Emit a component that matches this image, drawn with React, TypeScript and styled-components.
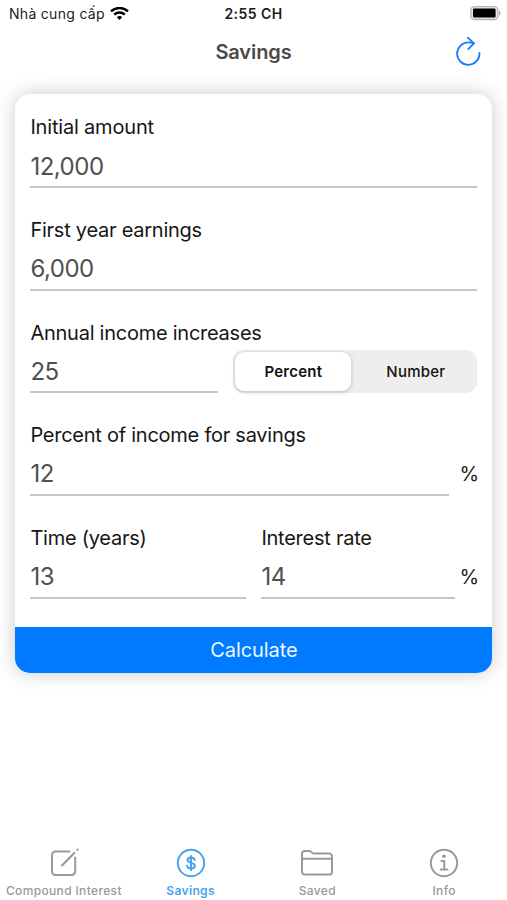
import React, { useState } from "react";
import styled, { createGlobalStyle } from "styled-components";

const GlobalStyle = createGlobalStyle`
  *, *::before, *::after { box-sizing: border-box; }
  body {
    margin: 0;
    background: #fff;
    font-family: Inter, "Liberation Sans", sans-serif;
    -webkit-font-smoothing: antialiased;
  }
  button, input { font-family: inherit; }
`;

const Screen = styled.div`
  display: flex;
  flex-direction: column;
  width: 507px;
  height: 900px;
  overflow: hidden;
  background: #fff;
`;

const StatusBar = styled.header`
  display: grid;
  grid-template-columns: 1fr auto 1fr;
  align-items: center;
  height: 27px;
  padding: 0 6px 0 9px;
  color: #1c1c1c;
`;

const Carrier = styled.div`
  display: flex;
  align-items: center;
  gap: 5px;
  font-size: 14px;
  letter-spacing: 0.3px;
`;

const Clock = styled.time`
  margin-left: -3px;
  font-size: 14px;
  font-weight: 600;
  letter-spacing: 0.45px;
`;

const BatterySlot = styled.div`
  display: flex;
  justify-content: flex-end;
`;

const NavBar = styled.div`
  display: grid;
  grid-template-columns: 1fr auto 1fr;
  align-items: center;
  height: 50px;
  padding: 0 25px;
`;

const NavTitle = styled.h1`
  grid-column: 2;
  margin: 0;
  font-size: 20px;
  font-weight: 600;
  letter-spacing: -0.1px;
  color: #4a4a4a;
`;

const RefreshButton = styled.button`
  display: flex;
  justify-self: end;
  padding: 0;
  border: 0;
  background: none;
`;

const Card = styled.form`
  display: flex;
  flex-direction: column;
  width: 477px;
  height: 579px;
  margin: 17px 0 0 15.4px;
  overflow: hidden;
  border-radius: 15px;
  background: #fff;
  box-shadow: 0 0 20px rgba(0, 0, 0, 0.21);
`;

const Fields = styled.div`
  flex: 1;
  padding: 20px 15px 0;
`;

const FieldRow = styled.div`
  display: flex;
  align-items: flex-start;
  height: 102.65px;
`;

const Field = styled.label<{ $width?: number; $offset?: number }>`
  display: flex;
  flex: ${(p) => (p.$width ? `0 0 ${p.$width}px` : "1")};
  flex-direction: column;
  min-width: 0;
  margin-left: ${(p) => p.$offset ?? 0}px;
`;

const Label = styled.span<{ $tracking?: number }>`
  height: 27px;
  padding-top: 0.4px;
  font-size: 20px;
  line-height: 27px;
  letter-spacing: ${(p) => p.$tracking ?? -0.25}px;
  white-space: nowrap;
  color: #161616;
`;

const Value = styled.input`
  width: 100%;
  height: 47px;
  padding: 5px 0 0;
  border: 0;
  border-bottom: 2px solid #c6c6c6;
  border-radius: 0;
  outline: 0;
  background: transparent;
  font-size: 24px;
  letter-spacing: -0.5px;
  color: #505050;
`;

const Unit = styled.span<{ $gap: number }>`
  width: 18px;
  margin: 39.5px 0 0 ${(p) => p.$gap}px;
  font-size: 20px;
  line-height: 27px;
  letter-spacing: -0.5px;
  color: #222;
`;

const Segments = styled.div`
  display: flex;
  gap: 5px;
  width: 244px;
  height: 43px;
  margin: 31px 0 0 15px;
  padding: 2px;
  border-radius: 11px;
  background: #eee;
`;

const Segment = styled.button<{ $active: boolean }>`
  flex: ${(p) => (p.$active ? "0 0 116px" : "1")};
  padding: 0;
  border: 0;
  border-radius: 9px;
  background: ${(p) => (p.$active ? "#fff" : "transparent")};
  box-shadow: ${(p) => (p.$active ? "0 1px 4px rgba(0, 0, 0, 0.22)" : "none")};
  font-size: 15px;
  font-weight: ${(p) => (p.$active ? 600 : 500)};
  letter-spacing: 0.25px;
  color: #111;
`;

const CalculateButton = styled.button`
  height: 46.5px;
  padding: 0;
  border: 0;
  background: #007aff;
  font-size: 20px;
  letter-spacing: -0.1px;
  color: #eef6ff;
`;

const TabBar = styled.nav`
  display: grid;
  grid-template-columns: repeat(4, 1fr);
  height: 60px;
  margin-top: auto;
`;

const Tab = styled.button<{ $active?: boolean }>`
  display: flex;
  flex-direction: column;
  align-items: center;
  gap: 3px;
  padding: 6px 0 0 1px;
  border: 0;
  background: none;
  font-size: 12px;
  font-weight: ${(p) => (p.$active ? 600 : 500)};
  line-height: 15px;
  letter-spacing: 0.35px;
  white-space: nowrap;
  color: ${(p) => (p.$active ? "#4ba3ee" : "#999")};
`;

const TabIcon = styled.svg`
  width: 34px;
  height: 34px;
  fill: none;
  stroke: currentColor;
  stroke-width: 2;
  stroke-linecap: round;
  stroke-linejoin: round;
`;

const WifiIcon = () => (
  <svg width="19" height="14" viewBox="0 0 19 14" fill="none" stroke="#000" strokeWidth="2.5">
    <path d="M1 4.4C5.8-.1 13.2-.1 18 4.4" />
    <path d="M4.2 7.6c3-2.8 7.6-2.8 10.6 0" />
    <path d="M6.8 10.2c1.5-1.5 3.9-1.5 5.4 0L9.5 12.9z" fill="#000" stroke="none" />
  </svg>
);

const BatteryIcon = () => (
  <svg width="31" height="15" viewBox="0 0 31 15">
    <rect x="0.9" y="0.7" width="27" height="12.8" rx="3.6" fill="#e8e8e8" stroke="#b4b4b4" strokeWidth="1.3" />
    <rect x="3" y="2.6" width="22.6" height="9" rx="1.4" fill="#000" />
    <path d="M29 4.8c2.1.8 2.1 4.2 0 5z" fill="#aaa" />
  </svg>
);

const RefreshIcon = () => (
  <svg width="26" height="32" viewBox="0 0 26 32" fill="none" stroke="#147efb" strokeWidth="1.8" strokeLinecap="round" strokeLinejoin="round">
    <path d="M23.5 17A11.2 11.2 0 1 1 12.3 6.4Q15.2 6.3 17.8 7.3" />
    <path d="M11.9 1.6L18 7.3l-5.8 5.8" />
  </svg>
);

const ComposeIcon = () => (
  <TabIcon viewBox="0 0 34 34">
    <path d="M22.5 5.5H8.5A3.5 3.5 0 0 0 5 9v16.5A3.5 3.5 0 0 0 8.5 29h16.2a3.5 3.5 0 0 0 3.5-3.5V11.5" />
    <path d="M15 19.4L27.3 7M30.3 3.9l.3-.3" strokeWidth="2.2" />
  </TabIcon>
);

const DollarIcon = () => (
  <TabIcon viewBox="0 0 34 34">
    <circle cx="17" cy="17" r="13.2" />
    <path d="M20.7 14c-.3-1.6-1.7-2.4-3.7-2.4s-3.5.9-3.5 2.5c0 3.7 7.4 1.8 7.4 5.7 0 1.8-1.6 2.7-3.9 2.7s-3.7-1-4-2.8M17 10v14.2" />
  </TabIcon>
);

const FolderIcon = () => (
  <TabIcon viewBox="0 0 34 34">
    <path d="M2 12.8V7.9a2.8 2.8 0 0 1 2.8-2.8h4.5c2.6 0 2.5 2.5 5 2.5h15a2.7 2.7 0 0 1 2.7 2.7v15.6a2.7 2.7 0 0 1-2.7 2.7H4.8A2.8 2.8 0 0 1 2 25.8v-13M2 12.8h30" />
  </TabIcon>
);

const InfoIcon = () => (
  <TabIcon viewBox="0 0 34 34">
    <circle cx="17" cy="17" r="13.2" />
    <path d="M14.3 14.9h3v8.3M13.7 23.5h6.8" />
    <circle cx="16.9" cy="10.3" r="1.8" fill="currentColor" stroke="none" />
  </TabIcon>
);

const tabs = [
  { name: "Compound Interest", Icon: ComposeIcon },
  { name: "Savings", Icon: DollarIcon },
  { name: "Saved", Icon: FolderIcon },
  { name: "Info", Icon: InfoIcon },
];

export default function App() {
  const [mode, setMode] = useState("Percent");
  const [tab, setTab] = useState("Savings");

  return (
    <Screen>
      <GlobalStyle />
      <StatusBar>
        <Carrier>
          Nhà cung cấp
          <WifiIcon />
        </Carrier>
        <Clock>2:55 CH</Clock>
        <BatterySlot>
          <BatteryIcon />
        </BatterySlot>
      </StatusBar>
      <NavBar>
        <NavTitle>Savings</NavTitle>
        <RefreshButton type="button" aria-label="Reset">
          <RefreshIcon />
        </RefreshButton>
      </NavBar>
      <Card onSubmit={(e) => e.preventDefault()}>
        <Fields>
          <FieldRow>
            <Field>
              <Label $tracking={-0.18}>Initial amount</Label>
              <Value defaultValue="12,000" />
            </Field>
          </FieldRow>
          <FieldRow>
            <Field>
              <Label>First year earnings</Label>
              <Value defaultValue="6,000" />
            </Field>
          </FieldRow>
          <FieldRow>
            <Field $width={188}>
              <Label>Annual income increases</Label>
              <Value defaultValue="25" />
            </Field>
            <Segments>
              {["Percent", "Number"].map((name) => (
                <Segment key={name} type="button" $active={mode === name} onClick={() => setMode(name)}>
                  {name}
                </Segment>
              ))}
            </Segments>
          </FieldRow>
          <FieldRow>
            <Field>
              <Label>Percent of income for savings</Label>
              <Value defaultValue="12" />
            </Field>
            <Unit $gap={10}>%</Unit>
          </FieldRow>
          <FieldRow>
            <Field $width={216}>
              <Label>Time (years)</Label>
              <Value defaultValue="13" />
            </Field>
            <Field $width={194} $offset={15}>
              <Label>Interest rate</Label>
              <Value defaultValue="14" />
            </Field>
            <Unit $gap={4}>%</Unit>
          </FieldRow>
        </Fields>
        <CalculateButton type="submit">Calculate</CalculateButton>
      </Card>
      <TabBar>
        {tabs.map(({ name, Icon }) => (
          <Tab key={name} type="button" $active={tab === name} onClick={() => setTab(name)}>
            <Icon />
            {name}
          </Tab>
        ))}
      </TabBar>
    </Screen>
  );
}
